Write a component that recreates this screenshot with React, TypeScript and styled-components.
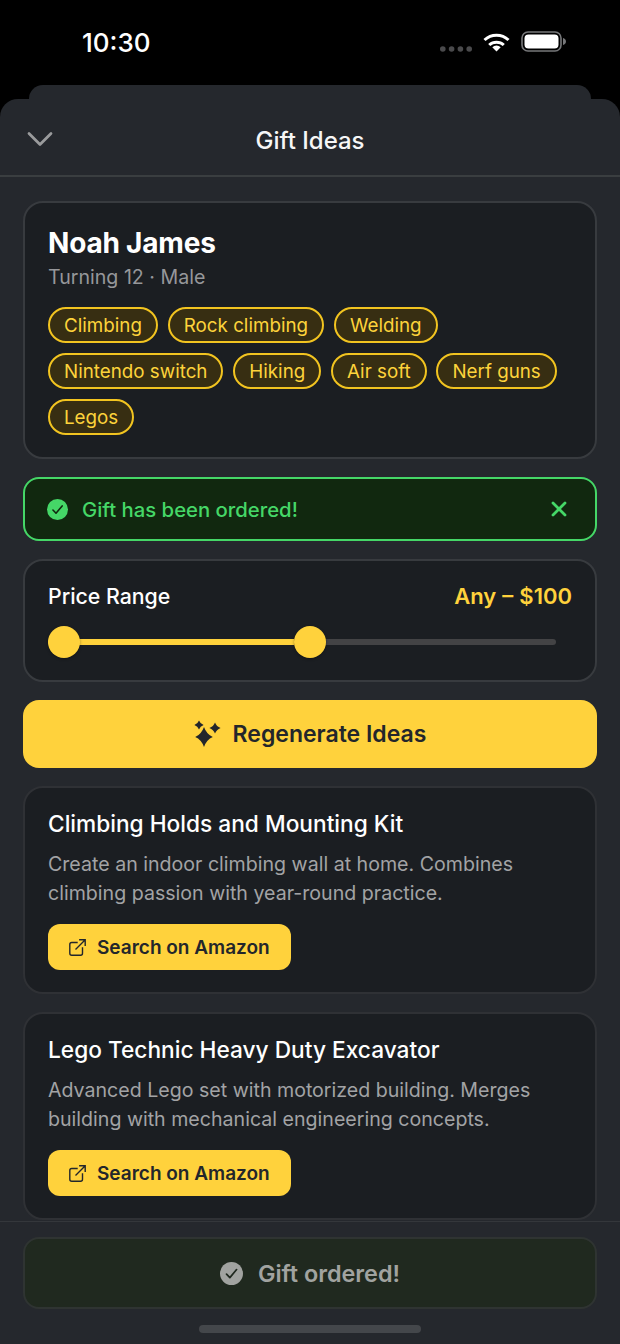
import React from "react";
import styled, { createGlobalStyle } from "styled-components";
import { ChevronDown, X } from "lucide-react";

const Global = createGlobalStyle`
  html, body { margin: 0; padding: 0; background: #000; }
  body { font-family: Inter, "Liberation Sans", sans-serif; -webkit-font-smoothing: antialiased; }
  * { box-sizing: border-box; }
`;

const Screen = styled.div`
  width: 620px;
  height: 1344px;
  display: flex;
  flex-direction: column;
  background: #000;
  overflow: hidden;
`;

const StatusBar = styled.div`
  height: 85px;
  flex: none;
  display: flex;
  align-items: flex-start;
  justify-content: space-between;
  padding: 26px 54px 0 82px;
`;

const Clock = styled.span`
  color: #fff;
  font-size: 26px;
  line-height: 34px;
  font-weight: 500;
`;

const StatusIcons = styled.div`
  display: flex;
  align-items: flex-end;
  gap: 11px;
  height: 26px;
`;

const BackSheet = styled.div`
  height: 14px;
  flex: none;
  margin: 0 29px;
  background: #25282d;
  border-radius: 16px 16px 0 0;
`;

const Sheet = styled.div`
  flex: 1;
  min-height: 0;
  display: flex;
  flex-direction: column;
  background: #25282d;
  border-radius: 18px 18px 0 0;
`;

const Header = styled.header`
  height: 78px;
  flex: none;
  position: relative;
  display: flex;
  align-items: center;
  justify-content: center;
  padding-top: 7px;
  border-bottom: 2px solid #3a3e40;
`;

const CloseToggle = styled.span`
  position: absolute;
  left: 18px;
  top: 18px;
  display: flex;
  color: #9a9b9c;
`;

const HeaderTitle = styled.h1`
  margin: 0;
  color: #f6f6f6;
  font-size: 24px;
  line-height: 30px;
  font-weight: 500;
`;

const Scroll = styled.main`
  height: 1044px;
  flex: none;
  overflow: hidden;
  padding: 24px 23px 0;
  display: flex;
  flex-direction: column;
  gap: 18px;
`;

const Card = styled.section<{ $soft?: boolean }>`
  flex: none;
  background: #1b1e22;
  border: 2px solid ${(p) => (p.$soft ? "#2f3135" : "#383b3f")};
  border-radius: 20px;
  padding: 23px 23px 22px;
`;

const Name = styled.h2`
  margin: 0;
  color: #fff;
  font-size: 28px;
  line-height: 32px;
  padding-top: 1px;
  padding-bottom: 1px;
  font-weight: 700;
  letter-spacing: -0.2px;
`;

const Subtitle = styled.p`
  margin: 0;
  color: #96979a;
  font-size: 19.6px;
  line-height: 28px;
  padding-top: 3px;
  font-weight: 400;
`;

const Chips = styled.div`
  display: flex;
  flex-wrap: wrap;
  gap: 10px 9.8px;
  margin-top: 16px;
`;

const Chip = styled.span`
  height: 36px;
  display: inline-flex;
  align-items: center;
  padding: 0 14px;
  border: 2px solid #f2c420;
  border-radius: 18px;
  background: #372e12;
  color: #fdd33b;
  font-size: 18.8px;
  font-weight: 400;
`;

const Alert = styled.div`
  height: 64px;
  flex: none;
  display: flex;
  align-items: center;
  gap: 14px;
  padding: 0 22px;
  background: #11280f;
  border: 2px solid #45d767;
  border-radius: 16px;
  color: #45d767;
  font-size: 20.3px;
  font-weight: 500;
`;

const AlertText = styled.span`
  flex: 1;
`;

const AlertClose = styled.span`
  display: flex;
  margin-right: 2px;
`;

const RangeHead = styled.div`
  display: flex;
  align-items: center;
  justify-content: space-between;
  height: 24px;
`;

const RangeLabel = styled.span`
  color: #fff;
  font-size: 21.3px;
  font-weight: 500;
`;

const RangeValue = styled.span`
  color: #ffd23c;
  font-size: 22px;
  font-weight: 600;
  word-spacing: 0.5px;
`;

const Slider = styled.div`
  position: relative;
  height: 32px;
  width: 508px;
  margin-top: 18px;
  display: flex;
  align-items: center;
`;

const Track = styled.div`
  width: 100%;
  height: 6px;
  border-radius: 3px;
  background: #434345;
  overflow: hidden;
`;

const TrackFill = styled.div`
  height: 100%;
  background: #ffd23c;
`;

const Thumb = styled.span<{ $at: number }>`
  position: absolute;
  top: 0;
  left: ${(p) => p.$at}px;
  width: 32px;
  height: 32px;
  border-radius: 50%;
  background: #ffd23c;
  box-shadow: 0 1px 3px rgba(0, 0, 0, 0.35);
`;

const PrimaryButton = styled.button`
  height: 68px;
  flex: none;
  display: flex;
  align-items: center;
  justify-content: center;
  gap: 11px;
  border: 0;
  border-radius: 16px;
  background: #ffd23c;
  color: #23262b;
  font-family: inherit;
  font-size: 23px;
  font-weight: 600;
`;

const IdeaTitle = styled.h3`
  margin: 0;
  color: #fff;
  font-size: 22.7px;
  line-height: 26px;
  font-weight: 500;
`;

const IdeaText = styled.p`
  margin: 13px 0 0;
  color: #a2a3a5;
  font-size: 19.6px;
  line-height: 29px;
  font-weight: 400;
`;

const AmazonButton = styled.button`
  width: fit-content;
  height: 46px;
  margin-top: 16px;
  display: flex;
  align-items: center;
  gap: 11px;
  padding: 0 21px;
  border: 0;
  border-radius: 12px;
  background: #ffd23c;
  color: #23262b;
  font-family: inherit;
  font-size: 19px;
  font-weight: 600;
`;

const Footer = styled.footer`
  flex: 1;
  display: flex;
  flex-direction: column;
  align-items: center;
  padding: 15px 23px 0;
  border-top: 1px solid #34373b;
`;

const OrderedButton = styled.div`
  width: 100%;
  height: 72px;
  flex: none;
  display: flex;
  align-items: center;
  justify-content: center;
  gap: 15px;
  background: #20291f;
  border: 2px solid #2f3432;
  border-radius: 16px;
  color: #a1a3a0;
  font-size: 23.4px;
  font-weight: 600;
`;

const HomeBar = styled.div`
  width: 222px;
  height: 8px;
  flex: none;
  margin-top: 16px;
  border-radius: 4px;
  background: #44474b;
`;

const interests = [
  "Climbing",
  "Rock climbing",
  "Welding",
  "Nintendo switch",
  "Hiking",
  "Air soft",
  "Nerf guns",
  "Legos",
];

const ideas = [
  {
    title: "Climbing Holds and Mounting Kit",
    text: ["Create an indoor climbing wall at home. Combines", "climbing passion with year-round practice."],
  },
  {
    title: "Lego Technic Heavy Duty Excavator",
    text: ["Advanced Lego set with motorized building. Merges", "building with mechanical engineering concepts."],
  },
];

const Wifi = () => (
  <svg width="27" height="20" viewBox="0 0 27 20" fill="none" stroke="#fff" strokeWidth="3">
    <path d="M1.500 8A17.500 17.500 0 0 1 25.500 8" />
    <path d="M6.200 13A10.800 10.800 0 0 1 20.800 13" />
    <path d="M13.500 19.500 9.300 15.200A6 6 0 0 1 17.700 15.200Z" fill="#fff" stroke="none" />
  </svg>
);

const Battery = () => (
  <svg width="45" height="21" viewBox="0 0 45 21">
    <rect x="1" y="1" width="39" height="19" rx="6" fill="none" stroke="#77787a" strokeWidth="1.600" />
    <rect x="3.500" y="3.500" width="34" height="14" rx="4" fill="#fff" />
    <path d="M42 7c1.700.4 3 1.800 3 3.500s-1.300 3.100-3 3.500z" fill="#77787a" />
  </svg>
);

const SignalDots = () => (
  <svg width="32" height="6" viewBox="0 0 32 6" fill="#4a4a4c">
    <circle cx="2.800" cy="3" r="2.800" />
    <circle cx="11.600" cy="3" r="2.800" />
    <circle cx="20.400" cy="3" r="2.800" />
    <circle cx="29.200" cy="3" r="2.800" />
  </svg>
);

const Sparkles = () => (
  <svg width="28" height="28" viewBox="0 0 28 28" fill="#23262b">
    <path d="M10 7Q12.600 14.400 18.800 17 12.600 19.600 10 27 7.400 19.600 1.200 17 7.400 14.400 10 7Z" />
    <path d="M21 2.500Q22.500 6.500 26.600 8 22.500 9.500 21 13.500 19.500 9.500 15.400 8 19.500 6.500 21 2.500Z" />
    <path d="M5 .6Q6.200 3.800 9.600 5 6.200 6.200 5 9.400 3.800 6.200 .4 5 3.800 3.800 5 .6Z" />
  </svg>
);

const ExternalLink = () => (
  <svg width="17" height="17" viewBox="0 0 17 17" fill="none" stroke="#23262b" strokeWidth="1.400" strokeLinecap="square" strokeLinejoin="miter">
    <path d="M8 3.500H2.700C1.600 3.500.8 4.300.8 5.400v8.900c0 1.100.8 1.900 1.900 1.900h8.900c1.100 0 1.900-.8 1.900-1.900V9" />
    <path d="M7 10 16 1M10.800.8H16.200V6.200" />
  </svg>
);

const CheckBadge = ({ size, fill, tick }: { size: number; fill: string; tick: string }) => (
  <svg width={size} height={size} viewBox="0 0 24 24">
    <circle cx="12" cy="12" r="12" fill={fill} />
    <path d="M6.800 12.600l3.500 3.700 7-8.400" fill="none" stroke={tick} strokeWidth="1.800" strokeLinecap="round" strokeLinejoin="round" />
  </svg>
);

export default function App() {
  return (
    <Screen>
      <Global />
      <StatusBar>
        <Clock>10:30</Clock>
        <StatusIcons>
          <SignalDots />
          <Wifi />
          <Battery />
        </StatusIcons>
      </StatusBar>
      <BackSheet />
      <Sheet>
        <Header>
          <CloseToggle>
            <ChevronDown size={44} strokeWidth={1.5} />
          </CloseToggle>
          <HeaderTitle>Gift Ideas</HeaderTitle>
        </Header>
        <Scroll>
          <Card>
            <Name>Noah James</Name>
            <Subtitle>Turning 12 · Male</Subtitle>
            <Chips>
              {interests.map((item) => (
                <Chip key={item}>{item}</Chip>
              ))}
            </Chips>
          </Card>
          <Alert>
            <CheckBadge size={21} fill="#45d767" tick="#11280f" />
            <AlertText>Gift has been ordered!</AlertText>
            <AlertClose>
              <X size={24} strokeWidth={2.8} />
            </AlertClose>
          </Alert>
          <Card>
            <RangeHead>
              <RangeLabel>Price Range</RangeLabel>
              <RangeValue>Any – $100</RangeValue>
            </RangeHead>
            <Slider>
              <Track>
                <TrackFill style={{ width: `${(246 / 508) * 100}%` }} />
              </Track>
              <Thumb $at={0} />
              <Thumb $at={246} />
            </Slider>
          </Card>
          <PrimaryButton>
            <Sparkles />
            Regenerate Ideas
          </PrimaryButton>
          {ideas.map((idea) => (
            <Card $soft key={idea.title}>
              <IdeaTitle>{idea.title}</IdeaTitle>
              <IdeaText>
                {idea.text[0]}
                <br />
                {idea.text[1]}
              </IdeaText>
              <AmazonButton>
                <ExternalLink />
                Search on Amazon
              </AmazonButton>
            </Card>
          ))}
        </Scroll>
        <Footer>
          <OrderedButton>
            <CheckBadge size={23} fill="#a1a3a0" tick="#20291f" />
            Gift ordered!
          </OrderedButton>
          <HomeBar />
        </Footer>
      </Sheet>
    </Screen>
  );
}
